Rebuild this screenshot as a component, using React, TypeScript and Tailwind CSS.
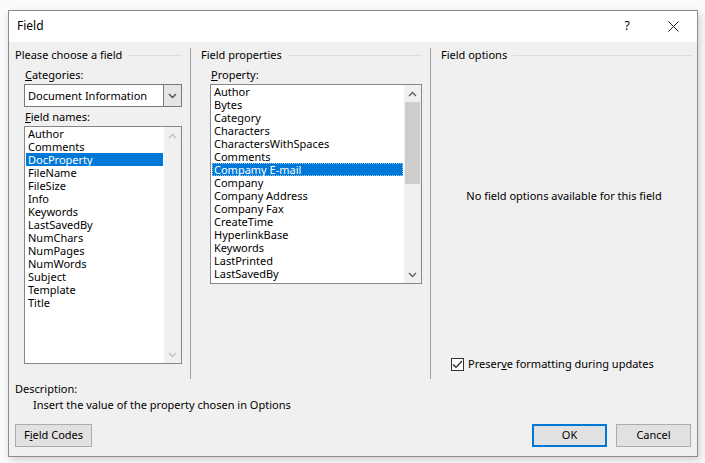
const fieldNames = [
  'Author',
  'Comments',
  'DocProperty',
  'FileName',
  'FileSize',
  'Info',
  'Keywords',
  'LastSavedBy',
  'NumChars',
  'NumPages',
  'NumWords',
  'Subject',
  'Template',
  'Title',
];

const properties = [
  'Author',
  'Bytes',
  'Category',
  'Characters',
  'CharactersWithSpaces',
  'Comments',
  'Compamy E-mail',
  'Company',
  'Company Address',
  'Company Fax',
  'CreateTime',
  'HyperlinkBase',
  'Keywords',
  'LastPrinted',
  'LastSavedBy',
];

function Chevron({ dir, color }: { dir: 'up' | 'down'; color: string }) {
  return (
    <svg width="9" height="6" viewBox="0 0 9 6" className="block">
      <path
        d={dir === 'up' ? 'M1 5 L4.5 1.5 L8 5' : 'M1 1 L4.5 4.5 L8 1'}
        fill="none"
        stroke={color}
        strokeWidth="1.4"
      />
    </svg>
  );
}

function GroupHeader({ title, pad }: { title: string; pad: string }) {
  return (
    <div className={`flex items-center h-[14px] ${pad}`}>
      <span className="whitespace-nowrap">{title}</span>
      <div className="flex-1 h-px bg-[#dcdcdc] ml-[6px]" />
    </div>
  );
}

function ListBox({
  items,
  selected,
  focused,
  className,
  thumb,
}: {
  items: string[];
  selected: number;
  focused?: boolean;
  className: string;
  thumb?: boolean;
}) {
  return (
    <div className={`flex bg-white border border-[#828790] ${className}`}>
      <div className="flex-1 pt-0 px-px pb-px">
        {items.map((it, i) => (
          <div
            key={it}
            className={`h-[13px] leading-[13px] pl-[2px] whitespace-nowrap ${
              i === selected ? 'bg-[#0078d7] text-white' : ''
            } ${i === selected && focused ? 'outline outline-1 outline-dotted outline-[#9fc9ee] -outline-offset-1' : ''}`}
          >
            {it}
          </div>
        ))}
      </div>
      <div className="w-[17px] bg-[#f0f0f0] flex flex-col">
        <div className="h-[17px] flex items-center justify-center">
          <Chevron dir="up" color={thumb ? '#606060' : '#c0c0c0'} />
        </div>
        <div className="flex-1 flex flex-col">
          {thumb && <div className="h-[82px] mx-px bg-[#cdcdcd]" />}
        </div>
        <div className="h-[17px] flex items-center justify-center">
          <Chevron dir="down" color={thumb ? '#606060' : '#c0c0c0'} />
        </div>
      </div>
    </div>
  );
}

export default function App() {
  return (
    <div className="w-[705px] h-[463px] bg-[#fbfbfb] pt-[10px] pl-[8px] text-[11px] text-black font-['Noto_Sans',sans-serif] overflow-hidden">
      <div className="w-[690px] h-[447px] border border-[#8c8c8c] bg-[#f0f0f0] flex flex-col shadow-[2px_3px_8px_rgba(0,0,0,0.18)]">
        {/* title bar */}
        <div className="h-[31px] bg-white flex items-center pl-[8px] pb-[1px] shrink-0">
          <span className="text-[12px]">Field</span>
          <div className="flex-1" />
          <span className="w-[46px] text-center text-[12px]">?</span>
          <div className="w-[46px] flex items-center justify-center mr-[1px]">
            <svg width="11" height="11" viewBox="0 0 11 11">
              <path d="M0.5 0.5 L10.5 10.5 M10.5 0.5 L0.5 10.5" stroke="#222" strokeWidth="1" />
            </svg>
          </div>
        </div>

        {/* columns */}
        <div className="flex pt-[6px] pl-[6px] h-[337px]">
          <div className="w-[176px] border-r border-[#a0a0a0] flex flex-col">
            <GroupHeader title="Please choose a field" pad="pr-[8px]" />
            <div className="pl-[9px] pt-[5px]">
              <div className="h-[16px] leading-[16px] pl-px">
                <span className="underline">C</span>ategories:
              </div>
              <div className="mt-[1px] w-[158px] h-[23px] bg-white border border-[#7a7a7a] flex">
                <div className="flex-1 pl-[3px] leading-[21px]">Document Information</div>
                <div className="w-[18px] bg-[#e5e5e5] border-l border-[#7a7a7a] flex items-center justify-center">
                  <Chevron dir="down" color="#505050" />
                </div>
              </div>
              <div className="h-[16px] leading-[16px] pl-px mt-[2px]">
                <span className="underline">F</span>ield names:
              </div>
              <ListBox
                items={fieldNames}
                selected={2}
                className="mt-[1px] w-[158px] h-[238px]"
              />
            </div>
          </div>

          <div className="w-[240px] border-r border-[#a0a0a0] flex flex-col">
            <GroupHeader title="Field properties" pad="pl-[10px] pr-[8px]" />
            <div className="pl-[19px] pt-[5px]">
              <div className="h-[16px] leading-[16px] pl-px">
                <span className="underline">P</span>roperty:
              </div>
              <ListBox
                items={properties}
                selected={6}
                focused
                thumb
                className="mt-[1px] w-[212px] h-[200px]"
              />
            </div>
          </div>

          <div className="flex-1 flex flex-col">
            <GroupHeader title="Field options" pad="pl-[10px] pr-[5px]" />
            <div className="flex-1 flex items-center justify-center pb-[26px]">
              No field options available for this field
            </div>
            <div className="flex items-center pl-[20px] mb-[8px] h-[14px]">
              <div className="w-[13px] h-[13px] bg-white border border-[#333] flex items-center justify-center">
                <svg width="11" height="9" viewBox="0 0 11 9">
                  <path d="M1 4.5 L4 7.5 L10 1" fill="none" stroke="#222" strokeWidth="1.2" />
                </svg>
              </div>
              <span className="ml-[4px]">
                Preser<span className="underline">v</span>e formatting during updates
              </span>
            </div>
          </div>
        </div>

        {/* description */}
        <div className="pl-[6px] pt-[2px]">
          <div className="h-[15px] leading-[15px]">Description:</div>
          <div className="h-[15px] leading-[15px] pl-[18px] mt-[1px]">
            Insert the value of the property chosen in Options
          </div>
        </div>

        {/* buttons */}
        <div className="flex pl-[6px] pr-[6px] mt-[12px]">
          <div className="w-[77px] h-[23px] bg-[#e1e1e1] border border-[#adadad] flex items-center justify-center">
            <span>
              F<span className="underline">i</span>eld Codes
            </span>
          </div>
          <div className="flex-1" />
          <div className="w-[75px] h-[23px] bg-[#e1e1e1] border-2 border-[#0078d7] flex items-center justify-center">
            OK
          </div>
          <div className="w-[75px] h-[23px] ml-[9px] bg-[#e1e1e1] border border-[#adadad] flex items-center justify-center">
            Cancel
          </div>
        </div>
      </div>
    </div>
  );
}
